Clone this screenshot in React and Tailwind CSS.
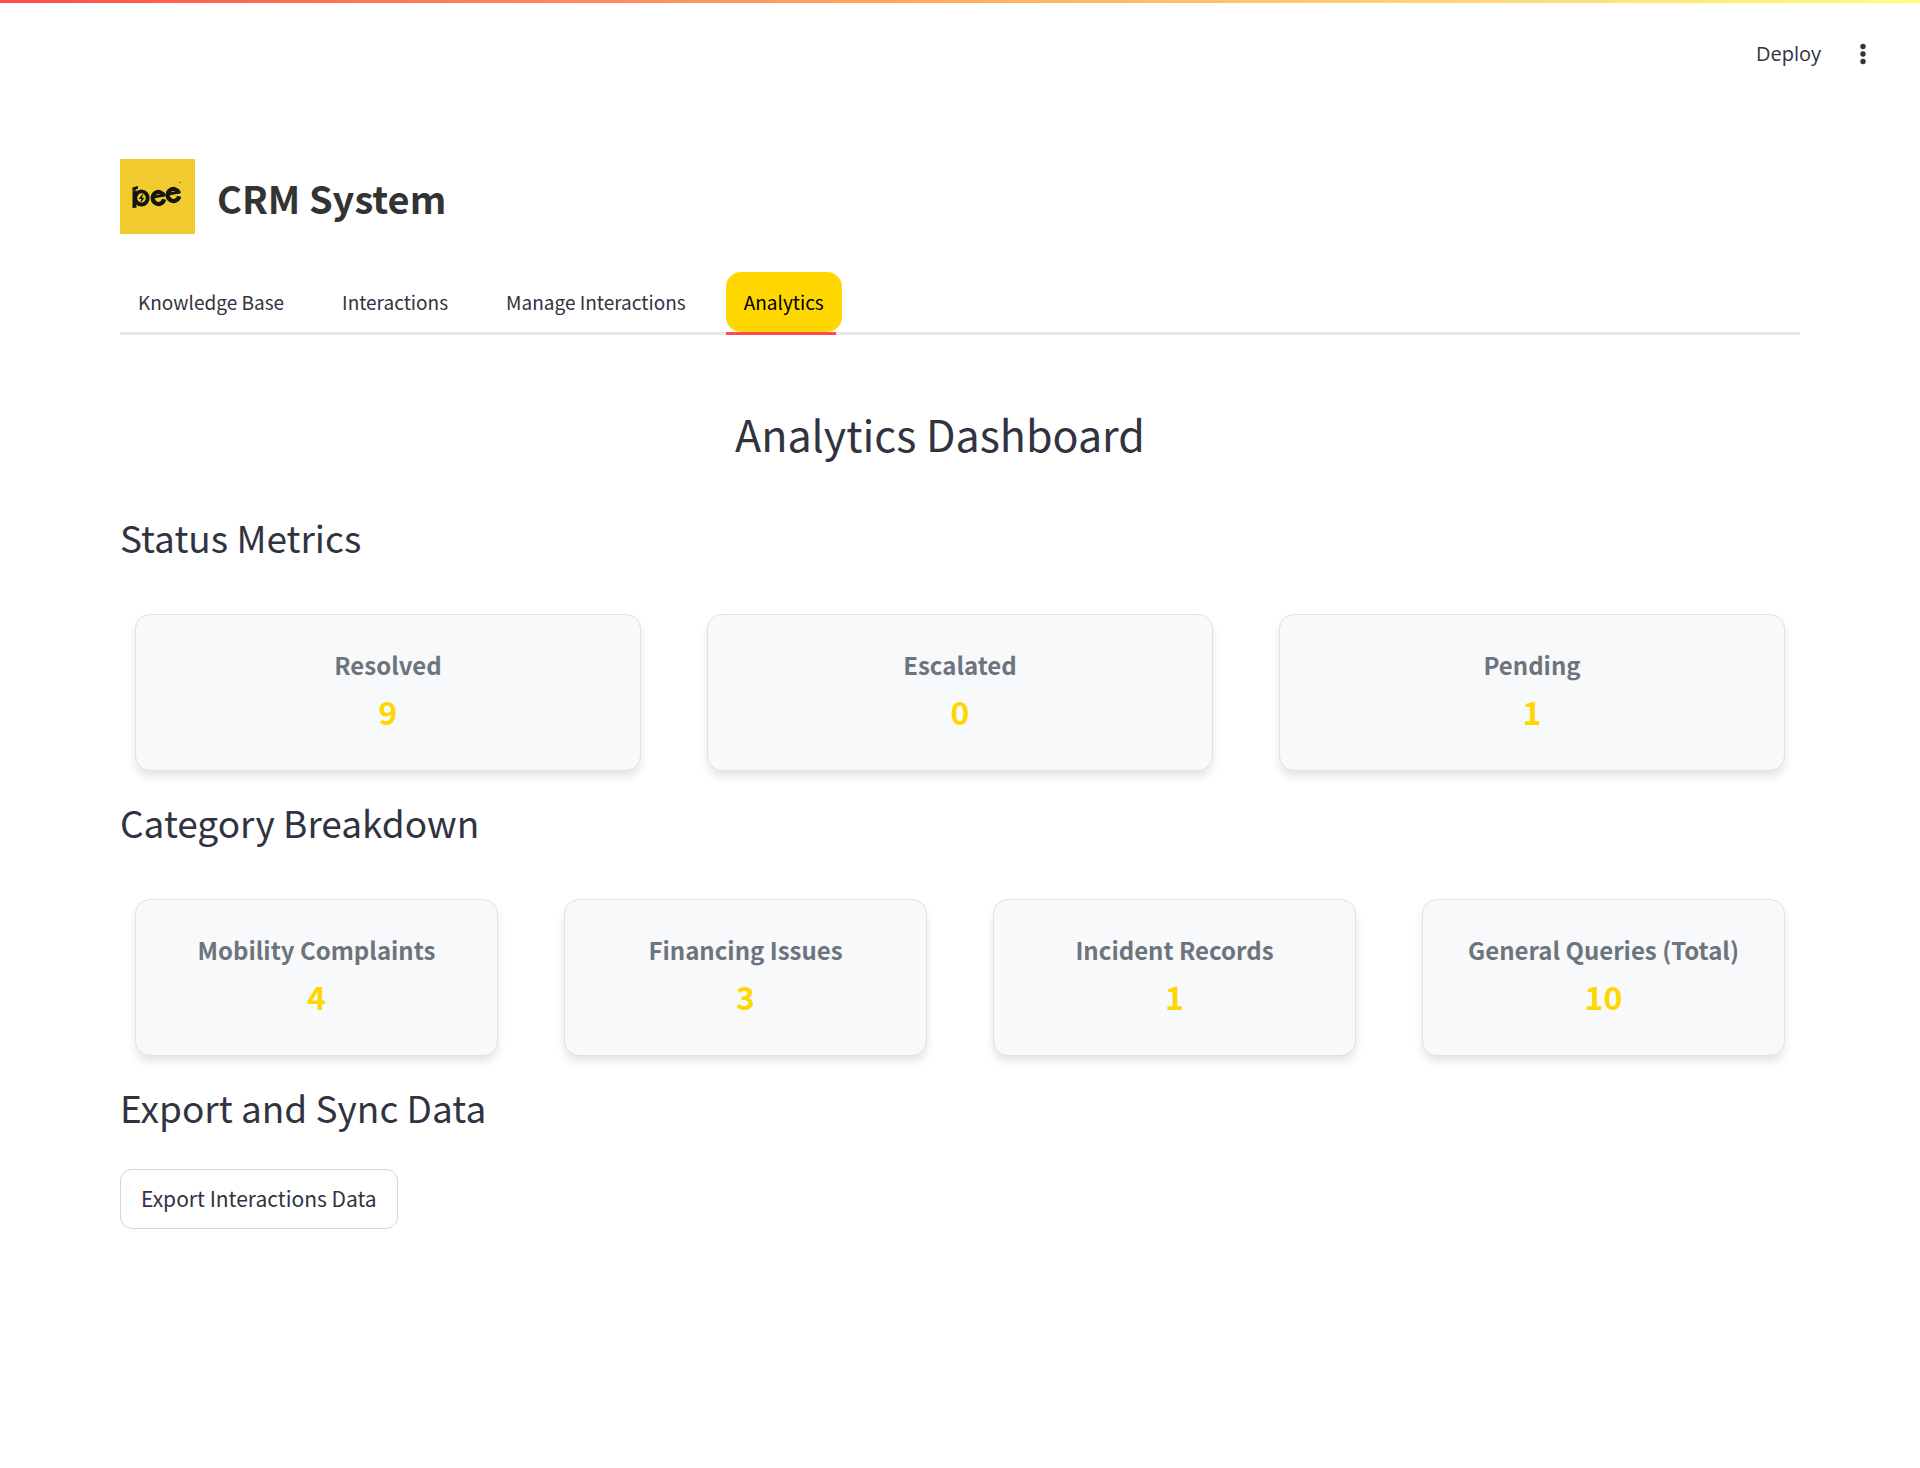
const tabs = ["Knowledge Base", "Interactions", "Manage Interactions", "Analytics"];

const statusMetrics = [
  { label: "Resolved", value: 9 },
  { label: "Escalated", value: 0 },
  { label: "Pending", value: 1 },
];

const categoryMetrics = [
  { label: "Mobility Complaints", value: 4 },
  { label: "Financing Issues", value: 3 },
  { label: "Incident Records", value: 1 },
  { label: "General Queries (Total)", value: 10 },
];

function BeeLogo() {
  return (
    <svg viewBox="0 0 75 75" className="size-[75px] shrink-0" role="img" aria-label="bee">
      <rect width="75" height="75" fill="#f1cb30" />
      <g fill="none" stroke="#15150f">
        <ellipse cx="21.500" cy="39" rx="6.200" ry="6.600" strokeWidth="3.800" />
        <g transform="translate(38 36.500) rotate(-10)">
          <path d="M-5 0.800H6" strokeWidth="2.800" />
          <path d="M5.800 2A5.800 6 0 1 0 5.400 4.800" strokeWidth="4.200" />
        </g>
        <g transform="translate(53 33.500) rotate(-10)">
          <path d="M-5 0.800H6" strokeWidth="2.800" />
          <path d="M5.800 2A5.800 6 0 1 0 5.400 4.800" strokeWidth="4.200" />
        </g>
      </g>
      <path d="M12.500 32.500l4-1.500v17.500l-4 0.700z" fill="#15150f" />
      <path d="M12.500 28.500l5.500-1.500v2.500l-5.500 3z" fill="#15150f" />
      <path d="M23.500 34l-5 5.800h2.800l-1.200 4.700 4.500-5.700h-2.600z" fill="#15150f" />
      <circle cx="60.300" cy="23.300" r="0.900" fill="#8a7a2a" />
    </svg>
  );
}

function MetricCard({ label, value }) {
  return (
    <div className="mx-[15px] flex h-[157px] flex-col items-center rounded-[15px] border border-[#dee2e6] bg-[#f8f9fb] pt-7 shadow-[0_6px_9px_rgba(0,0,0,0.1)]">
      <h3 className="text-[24px] leading-[44px] font-bold text-[#6c757d]">{label}</h3>
      <p className="text-[32px] leading-[48px] font-bold text-[#ffd700]">{value}</p>
    </div>
  );
}

function SectionTitle({ children }) {
  return <h2 className="text-[37px] leading-[46px]">{children}</h2>;
}

export default function App() {
  return (
    <div className="min-h-screen bg-white font-['Noto_Sans_CJK_SC',sans-serif] text-[#31333f]">
      <div className="h-[3px] bg-linear-to-r from-[#ff4b4b] to-[#fffd80]" />
      <header className="flex h-[102px] items-center justify-end gap-6 pr-[39px] font-['Open_Sans',sans-serif]">
        <button type="button" className="text-[20px] leading-[30px]">Deploy</button>
        <button type="button" aria-label="Main menu" className="flex w-9 justify-center">
          <svg viewBox="0 0 6 22" className="h-[22px] w-[6px]" fill="#31333f">
            <circle cx="3" cy="3.500" r="2.700" />
            <circle cx="3" cy="11" r="2.700" />
            <circle cx="3" cy="18.500" r="2.700" />
          </svg>
        </button>
      </header>

      <main className="px-[120px] pt-[54px]">
        <div className="flex items-center gap-[22px]">
          <BeeLogo />
          <h1 className="pt-[2px] text-[38px] leading-[56px] font-bold text-[#333333]">CRM System</h1>
        </div>

        <div role="tablist" className="mt-[38px] flex gap-[22px] border-b-[3px] border-[#e8e8ea]">
          {tabs.map((tab) => {
            const active = tab === "Analytics";
            return (
              <button
                key={tab}
                type="button"
                role="tab"
                aria-selected={active}
                className={
                  active
                    ? "relative h-[60px] rounded-[15px] bg-[#ffd700] px-[18px] text-[19px] text-black"
                    : "h-[60px] px-[18px] text-[19px]"
                }
              >
                {tab}
                {active && <span className="absolute top-full left-0 h-[3px] w-[110px] bg-[#ff4b4b]" />}
              </button>
            );
          })}
        </div>

        <h2 className="mt-[68px] pr-10 text-center text-[43px] leading-[60px]">Analytics Dashboard</h2>

        <section className="mt-[51px]">
          <SectionTitle>Status Metrics</SectionTitle>
          <div className="mt-[54px] grid grid-cols-3 gap-9">
            {statusMetrics.map((m) => <MetricCard key={m.label} {...m} />)}
          </div>
        </section>

        <section className="mt-[28px]">
          <SectionTitle>Category Breakdown</SectionTitle>
          <div className="mt-[54px] grid grid-cols-4 gap-9">
            {categoryMetrics.map((m) => <MetricCard key={m.label} {...m} />)}
          </div>
        </section>

        <section className="mt-[28px]">
          <SectionTitle>Export and Sync Data</SectionTitle>
          <button type="button" className="mt-[39px] h-[60px] rounded-xl border border-[#d6d6d9] bg-white px-5 text-[21px]">
            Export Interactions Data
          </button>
        </section>
      </main>
    </div>
  );
}
